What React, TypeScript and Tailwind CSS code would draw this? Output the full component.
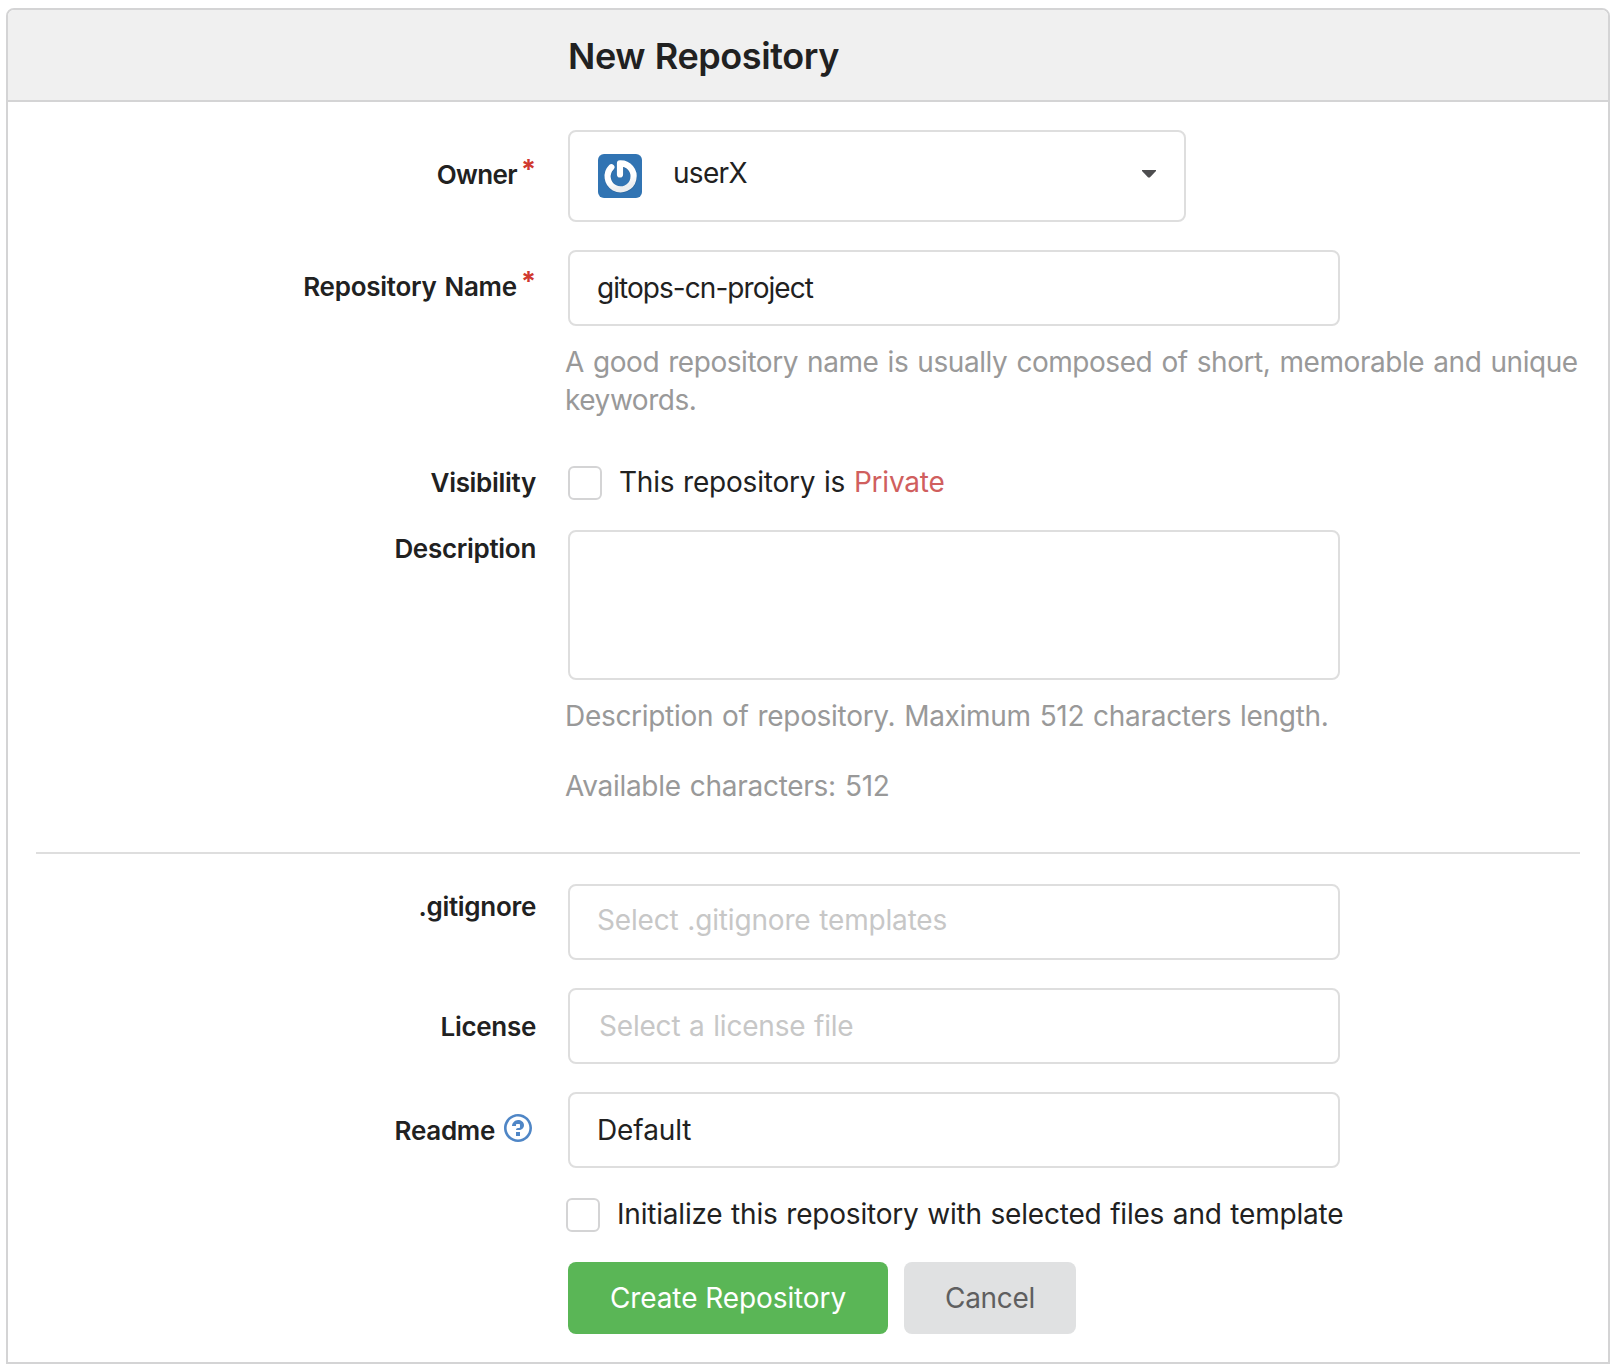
import type { ReactNode } from "react";

function Avatar() {
  return (
    <svg className="mt-[22px] size-11 shrink-0" viewBox="0 0 44 44" role="img" aria-label="userX avatar">
      <defs>
        <linearGradient id="ring" x1="0" y1="0" x2="0.3" y2="1">
          <stop offset="0.7" stopColor="#ffffff" />
          <stop offset="1" stopColor="#eceef0" />
        </linearGradient>
      </defs>
      <rect width="44" height="44" rx="6" fill="#3174b3" />
      <g fill="none" strokeLinecap="round" strokeLinejoin="round">
        <path d="M13.6 13.6 A13 13 0 1 0 22.3 9.8 V20.6" stroke="#24598d" strokeOpacity="0.5" strokeWidth="6.8" />
        <path d="M13.4 13.2 A13 13 0 1 0 22 9.4 V20.4" stroke="url(#ring)" strokeWidth="6.2" />
      </g>
    </svg>
  );
}

function HelpIcon() {
  return (
    <svg className="mr-1 ml-[9px] -mt-px size-7" viewBox="0 0 14 14" aria-label="Help">
      <path
        fill="#4f86c6"
        fillRule="evenodd"
        d="M6 10h2v2H6v-2zm4-3.5C10 8.64 8 9 8 9H6c0-.55.45-1 1-1h.5c.28 0 .5-.22.5-.5v-1c0-.28-.22-.5-.5-.5h-1c-.28 0-.5.22-.5.5V7H4c0-1.5 1.5-3 3-3s3 1 3 2.5zM7 2.3c3.14 0 5.7 2.56 5.7 5.7s-2.56 5.7-5.7 5.7A5.71 5.71 0 0 1 1.3 8c0-3.14 2.56-5.7 5.7-5.7zM7 1C3.14 1 0 4.14 0 8s3.14 7 7 7 7-3.14 7-7-3.14-7-7-7z"
        transform="translate(0 -1)"
      />
    </svg>
  );
}

function Required() {
  return <span className="-mt-[5px] ml-1 text-[27px] font-bold text-[#d0392f]">*</span>;
}

function Row({ label, offset, children }: { label?: ReactNode; offset?: string; children: ReactNode }) {
  return (
    <div className="grid grid-cols-[528px_1fr] gap-x-8">
      <div className={`flex items-start justify-end text-[26px] leading-8 font-semibold ${offset ?? ""}`}>
        {label}
      </div>
      <div>{children}</div>
    </div>
  );
}

const box = "flex h-[76px] w-[772px] rounded-lg border-2 border-[#dedede]";

function Checkbox() {
  return <span className="size-[34px] shrink-0 rounded-md border-2 border-[#d4d4d5]" />;
}

export default function App() {
  return (
    <div className="h-[1370px] w-[1618px] bg-white pt-2 pl-1.5 font-['Inter',sans-serif] text-[28px] leading-[38px] text-[#212121]">
      <form className="h-[1356px] w-[1604px] rounded-t-lg border-2 border-[#d4d4d5]">
        <h1 className="h-[92px] rounded-t-md border-b-2 border-[#d4d4d5] bg-[#f0f0f0] pt-[23px] pl-[560px] text-[36px] leading-[46px] font-semibold tracking-[-0.4px] [word-spacing:1px]">
          New Repository
        </h1>

        <div className="flex flex-col pt-7">
          <Row label={<><span className="tracking-[-0.65px]">Owner</span><Required /></>} offset="pt-[29px]">
            <div className="flex h-[92px] w-[618px] rounded-lg border-2 border-[#dedede] pr-[28px] pl-7">
              <Avatar />
              <span className="mt-[22px] ml-[31px] flex-1 tracking-[-0.7px]">userX</span>
              <svg className="mt-[38px] h-2 w-3.5" viewBox="0 0 14 8">
                <path d="M0 0h14v1L7.8 7.6H6.2L0 1z" fill="#4d4d4f" />
              </svg>
            </div>
          </Row>

          <div className="mt-7">
            <Row label={<><span className="tracking-[-0.25px] [word-spacing:1.5px]">Repository Name</span><Required /></>} offset="pt-[21px]">
              <div className={`${box} items-center pl-[27px] tracking-[-0.95px]`}>gitops-cn-project</div>
              <p className="mt-[17px] -ml-[3px] w-[1020px] tracking-[-0.45px] text-[#999999] [word-spacing:1.7px]">
                A good repository name is usually composed of short, memorable and unique keywords.
              </p>
            </Row>
          </div>

          <div className="mt-[47px]">
            <Row label={<span className="tracking-[-0.3px]">Visibility</span>} offset="pt-px">
              <div className="flex h-[34px] items-center gap-[17px]">
                <Checkbox />
                <span className="pb-0.5 tracking-[-0.2px] [word-spacing:1px]">
                  This repository is <span className="text-[#d05f5e]">Private</span>
                </span>
              </div>
            </Row>
          </div>

          <div className="mt-[30px]">
            <Row label={<span className="tracking-[-0.3px]">Description</span>} offset="pt-[3px]">
              <div className="h-[150px] w-[772px] rounded-lg border-2 border-[#dedede]" />
              <p className="mt-[17px] -ml-[3px] tracking-[-0.3px] text-[#999999] [word-spacing:1.3px]">
                Description of repository. Maximum 512 characters length.
              </p>
              <p className="mt-8 -ml-[3px] tracking-[-0.28px] text-[#999999] [word-spacing:1.5px]">
                Available characters: 512
              </p>
            </Row>
          </div>

          <div className="mx-7 mt-[47px] h-0.5 bg-[#dedede]" />

          <div className="mt-[30px] flex flex-col gap-7">
            <Row label={<span className="tracking-[-0.3px]">.gitignore</span>} offset="pt-[7px]">
              <div className={`${box} items-center pb-1 pl-[27px] tracking-[-0.18px] text-[#c7c7c7] [word-spacing:1.2px]`}>
                Select .gitignore templates
              </div>
            </Row>
            <Row label={<span className="tracking-[-0.3px]">License</span>} offset="pt-[23px]">
              <div className={`${box} items-center pl-[29px] tracking-[-0.2px] text-[#c7c7c7] [word-spacing:1px]`}>
                Select a license file
              </div>
            </Row>
            <Row label={<><span className="tracking-[-0.3px]">Readme</span><HelpIcon /></>} offset="pt-[23px]">
              <div className={`${box} items-center pl-[27px] tracking-[-0.1px]`}>Default</div>
            </Row>
          </div>

          <div className="mt-[30px]">
            <Row>
              <div className="-ml-0.5 flex h-[34px] items-center gap-[17px]">
                <Checkbox />
                <span className="pb-0.5 tracking-[-0.2px] [word-spacing:1px]">
                  Initialize this repository with selected files and template
                </span>
              </div>
            </Row>
          </div>

          <div className="mt-[30px]">
            <Row>
              <div className="flex gap-4">
                <button type="button" className="h-[72px] w-[320px] rounded-lg bg-[#5ab656] tracking-[-0.09px] text-white">
                  Create Repository
                </button>
                <button type="button" className="h-[72px] w-[172px] rounded-lg bg-[#e0e1e2] tracking-[-0.3px] text-[#5f5f60]">
                  Cancel
                </button>
              </div>
            </Row>
          </div>
        </div>
      </form>
    </div>
  );
}
